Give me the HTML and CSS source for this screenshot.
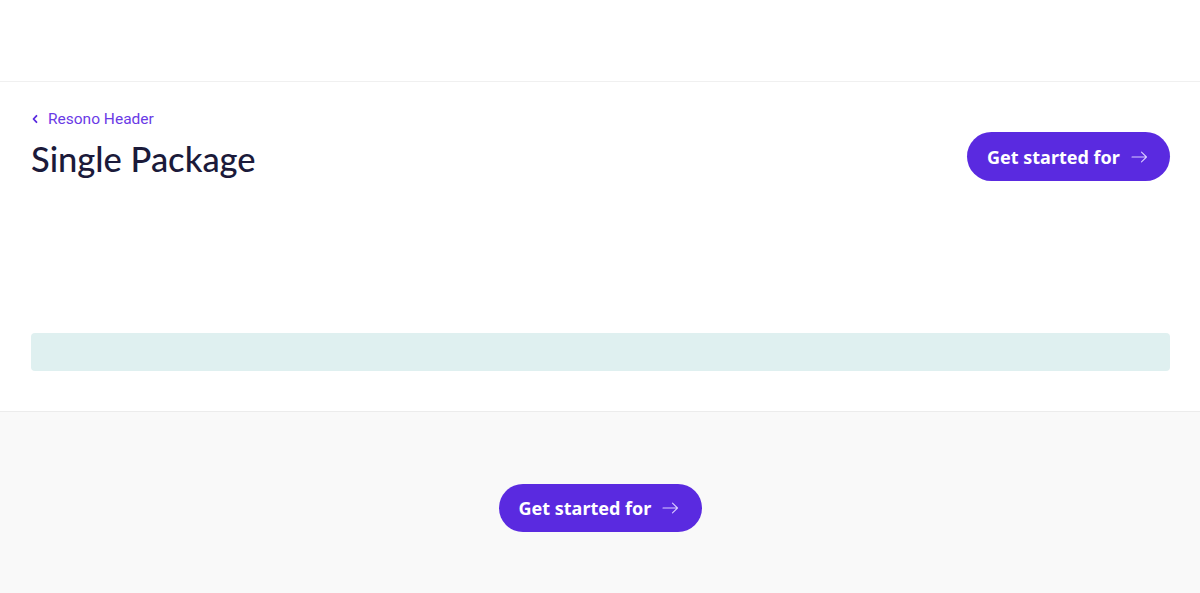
FILE: index.html
```html
<!DOCTYPE html>
<html lang="en">
<head>
<meta charset="utf-8">
<title>Single Package</title>
<link rel="stylesheet" href="styles.css">
</head>
<body>
<header class="topbar"></header>
<section class="package">
  <div class="package-head">
    <div class="titles">
      <a class="crumb" href="#">
        <svg class="crumb-icon" width="8" height="10" viewBox="0 0 8 10"><path d="M5.5 1.8 L2.5 5 L5.5 8.2" fill="none" stroke="currentColor" stroke-width="1.8" stroke-linecap="round" stroke-linejoin="round"/></svg>
        <span>Resono Header</span>
      </a>
      <h1 class="title">Single Package</h1>
    </div>
    <a class="cta cta-top" href="#">Get started for <svg class="arrow" width="17" height="12" viewBox="0 0 17 12"><path d="M1 6 H15.5 M10.5 1.2 L15.5 6 L10.5 10.8" fill="none" stroke="currentColor" stroke-width="1.1" stroke-linecap="round" stroke-linejoin="round"/></svg></a>
  </div>
  <div class="notice"></div>
</section>
<section class="footer-cta">
  <a class="cta" href="#">Get started for <svg class="arrow" width="17" height="12" viewBox="0 0 17 12"><path d="M1 6 H15.5 M10.5 1.2 L15.5 6 L10.5 10.8" fill="none" stroke="currentColor" stroke-width="1.1" stroke-linecap="round" stroke-linejoin="round"/></svg></a>
</section>
</body>
</html>
```
FILE: styles.css
```css
* { box-sizing: border-box; }
html, body { margin: 0; padding: 0; }
body {
  background: #f9f9f9;
  font-family: "Lato", "Noto Sans", sans-serif;
  color: #1b1a3a;
}
.topbar {
  height: 82px;
  background: #fff;
  border-bottom: 1px solid #f0f0f0;
}
.package {
  background: #fff;
  padding: 27px 30px 40px 31px;
  border-bottom: 1px solid #ececec;
}
.package-head {
  display: flex;
  justify-content: space-between;
  align-items: flex-start;
}
.titles { display: flex; flex-direction: column; gap: 10px; }
.crumb {
  display: flex;
  align-items: center;
  gap: 9px;
  height: 20px;
  font-family: "Roboto", "Inter", sans-serif;
  font-size: 15.5px;
  color: #6a3ae6;
  text-decoration: none;
}
.crumb-icon { color: #5a2ae0; }
.title {
  margin: 0;
  font-size: 34.5px;
  line-height: 40px;
  font-weight: 500;
  color: #1b1a3a;
}
.cta {
  display: inline-flex;
  align-items: center;
  gap: 11px;
  height: 49px;
  padding: 0 20px;
  border-radius: 25px;
  background: #5a2ae0;
  color: #fff;
  font-family: "Noto Sans", "Open Sans", sans-serif;
  font-size: 18px;
  font-weight: 700;
  text-decoration: none;
  white-space: nowrap;
}
.cta .arrow { color: #d9ccff; }
.cta-top { margin-top: 23px; width: 203px; }
.notice {
  margin-top: 152px;
  height: 38px;
  background: #dff0f0;
  border-radius: 4px;
}
.footer-cta {
  display: flex;
  justify-content: center;
  padding: 72px 0 60px;
}
.footer-cta .cta { width: 203px; height: 48px; }
```
